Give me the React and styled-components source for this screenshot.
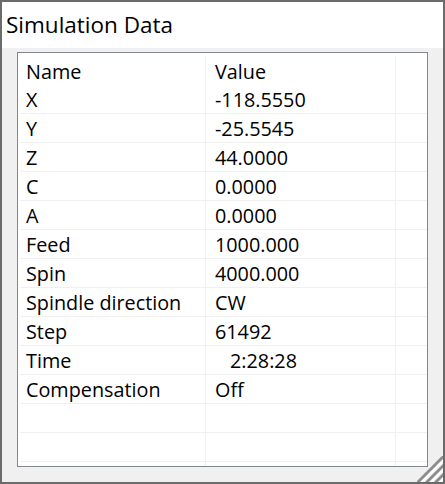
import React from "react";
import styled, { createGlobalStyle } from "styled-components";

const rows = [
  { name: "X", value: "-118.5550" },
  { name: "Y", value: "-25.5545" },
  { name: "Z", value: "44.0000" },
  { name: "C", value: "0.0000" },
  { name: "A", value: "0.0000" },
  { name: "Feed", value: "1000.000" },
  { name: "Spin", value: "4000.000" },
  { name: "Spindle direction", value: "CW" },
  { name: "Step", value: "61492" },
  { name: "Time", value: "2:28:28", indent: 15 },
  { name: "Compensation", value: "Off" },
];

const GlobalStyle = createGlobalStyle`
  html, body {
    margin: 0;
    padding: 0;
    background: #ffffff;
  }
  * {
    box-sizing: border-box;
  }
`;

function App() {
  return (
    <>
      <GlobalStyle />
      <Window>
        <TitleBar>Simulation Data</TitleBar>
        <Body>
          <Grid>
            <Row $height={32} $padTop={3}>
              <Cell $width={186} $pad={6}>Name</Cell>
              <Cell $width={190} $pad={9}>Value</Cell>
              <Cell $last />
            </Row>
            {rows.map((r) => (
              <Row key={r.name} $height={29} $line>
                <Cell $width={186} $pad={6}>{r.name}</Cell>
                <Cell $width={190} $pad={9 + (r.indent || 0)}>{r.value}</Cell>
                <Cell $last />
              </Row>
            ))}
            <Row $height={29} $line>
              <Cell $width={186} />
              <Cell $width={190} />
              <Cell $last />
            </Row>
            <Row $height={29} $line>
              <Cell $width={186} />
              <Cell $width={190} />
              <Cell $last />
            </Row>
            <Filler>
              <Cell $width={186} />
              <Cell $width={190} />
              <Cell $last />
            </Filler>
          </Grid>
        </Body>
        <Grip width="26" height="26" viewBox="0 0 26 26">
          <line x1="0" y1="27" x2="27" y2="0" stroke="#8c8c8c" strokeWidth="3" />
          <line x1="4" y1="27" x2="27" y2="4" stroke="#ffffff" strokeWidth="2.5" />
          <line x1="9" y1="27" x2="27" y2="9" stroke="#8c8c8c" strokeWidth="3" />
          <line x1="13" y1="27" x2="27" y2="13" stroke="#ffffff" strokeWidth="2.5" />
          <line x1="18" y1="27" x2="27" y2="18" stroke="#8c8c8c" strokeWidth="3" />
          <line x1="22" y1="27" x2="27" y2="22" stroke="#ffffff" strokeWidth="2.5" />
        </Grip>
      </Window>
    </>
  );
}

export default App;

const Window = styled.div`
  position: relative;
  width: 445px;
  height: 484px;
  border: 2px solid #6b6b6b;
  background-color: #f0f0f0;
  display: flex;
  flex-direction: column;
  font-family: "Open Sans", "Noto Sans", sans-serif;
  color: #000000;
`;

const TitleBar = styled.div`
  height: 46px;
  background-color: #ffffff;
  padding-left: 4px;
  display: flex;
  align-items: center;
  font-size: 22.5px;
  padding-bottom: 1px;
`;

const Body = styled.div`
  flex: 1;
  padding: 4px 15px 15px 15px;
  display: flex;
`;

const Grid = styled.div`
  flex: 1;
  background-color: #ffffff;
  border: 1px solid #828790;
  display: flex;
  flex-direction: column;
  overflow: hidden;
`;

const Row = styled.div`
  height: ${(p) => p.$height}px;
  flex: none;
  display: flex;
  padding-top: ${(p) => p.$padTop || 0}px;
  border-bottom: ${(p) => (p.$line ? "1px solid #f0f0f0" : "none")};
  margin-left: 2px;
`;

const Filler = styled.div`
  flex: 1;
  display: flex;
  margin-left: 2px;
`;

const Cell = styled.div`
  width: ${(p) => (p.$width ? `${p.$width}px` : "auto")};
  flex: ${(p) => (p.$last ? 1 : "none")};
  padding-left: ${(p) => p.$pad || 0}px;
  border-right: ${(p) => (p.$last ? "none" : "1px solid #f0f0f0")};
  display: flex;
  align-items: center;
  font-size: 19.8px;
  white-space: pre;
  margin-bottom: -1px;
`;

const Grip = styled.svg`
  position: absolute;
  right: 0;
  bottom: 0;
`;
